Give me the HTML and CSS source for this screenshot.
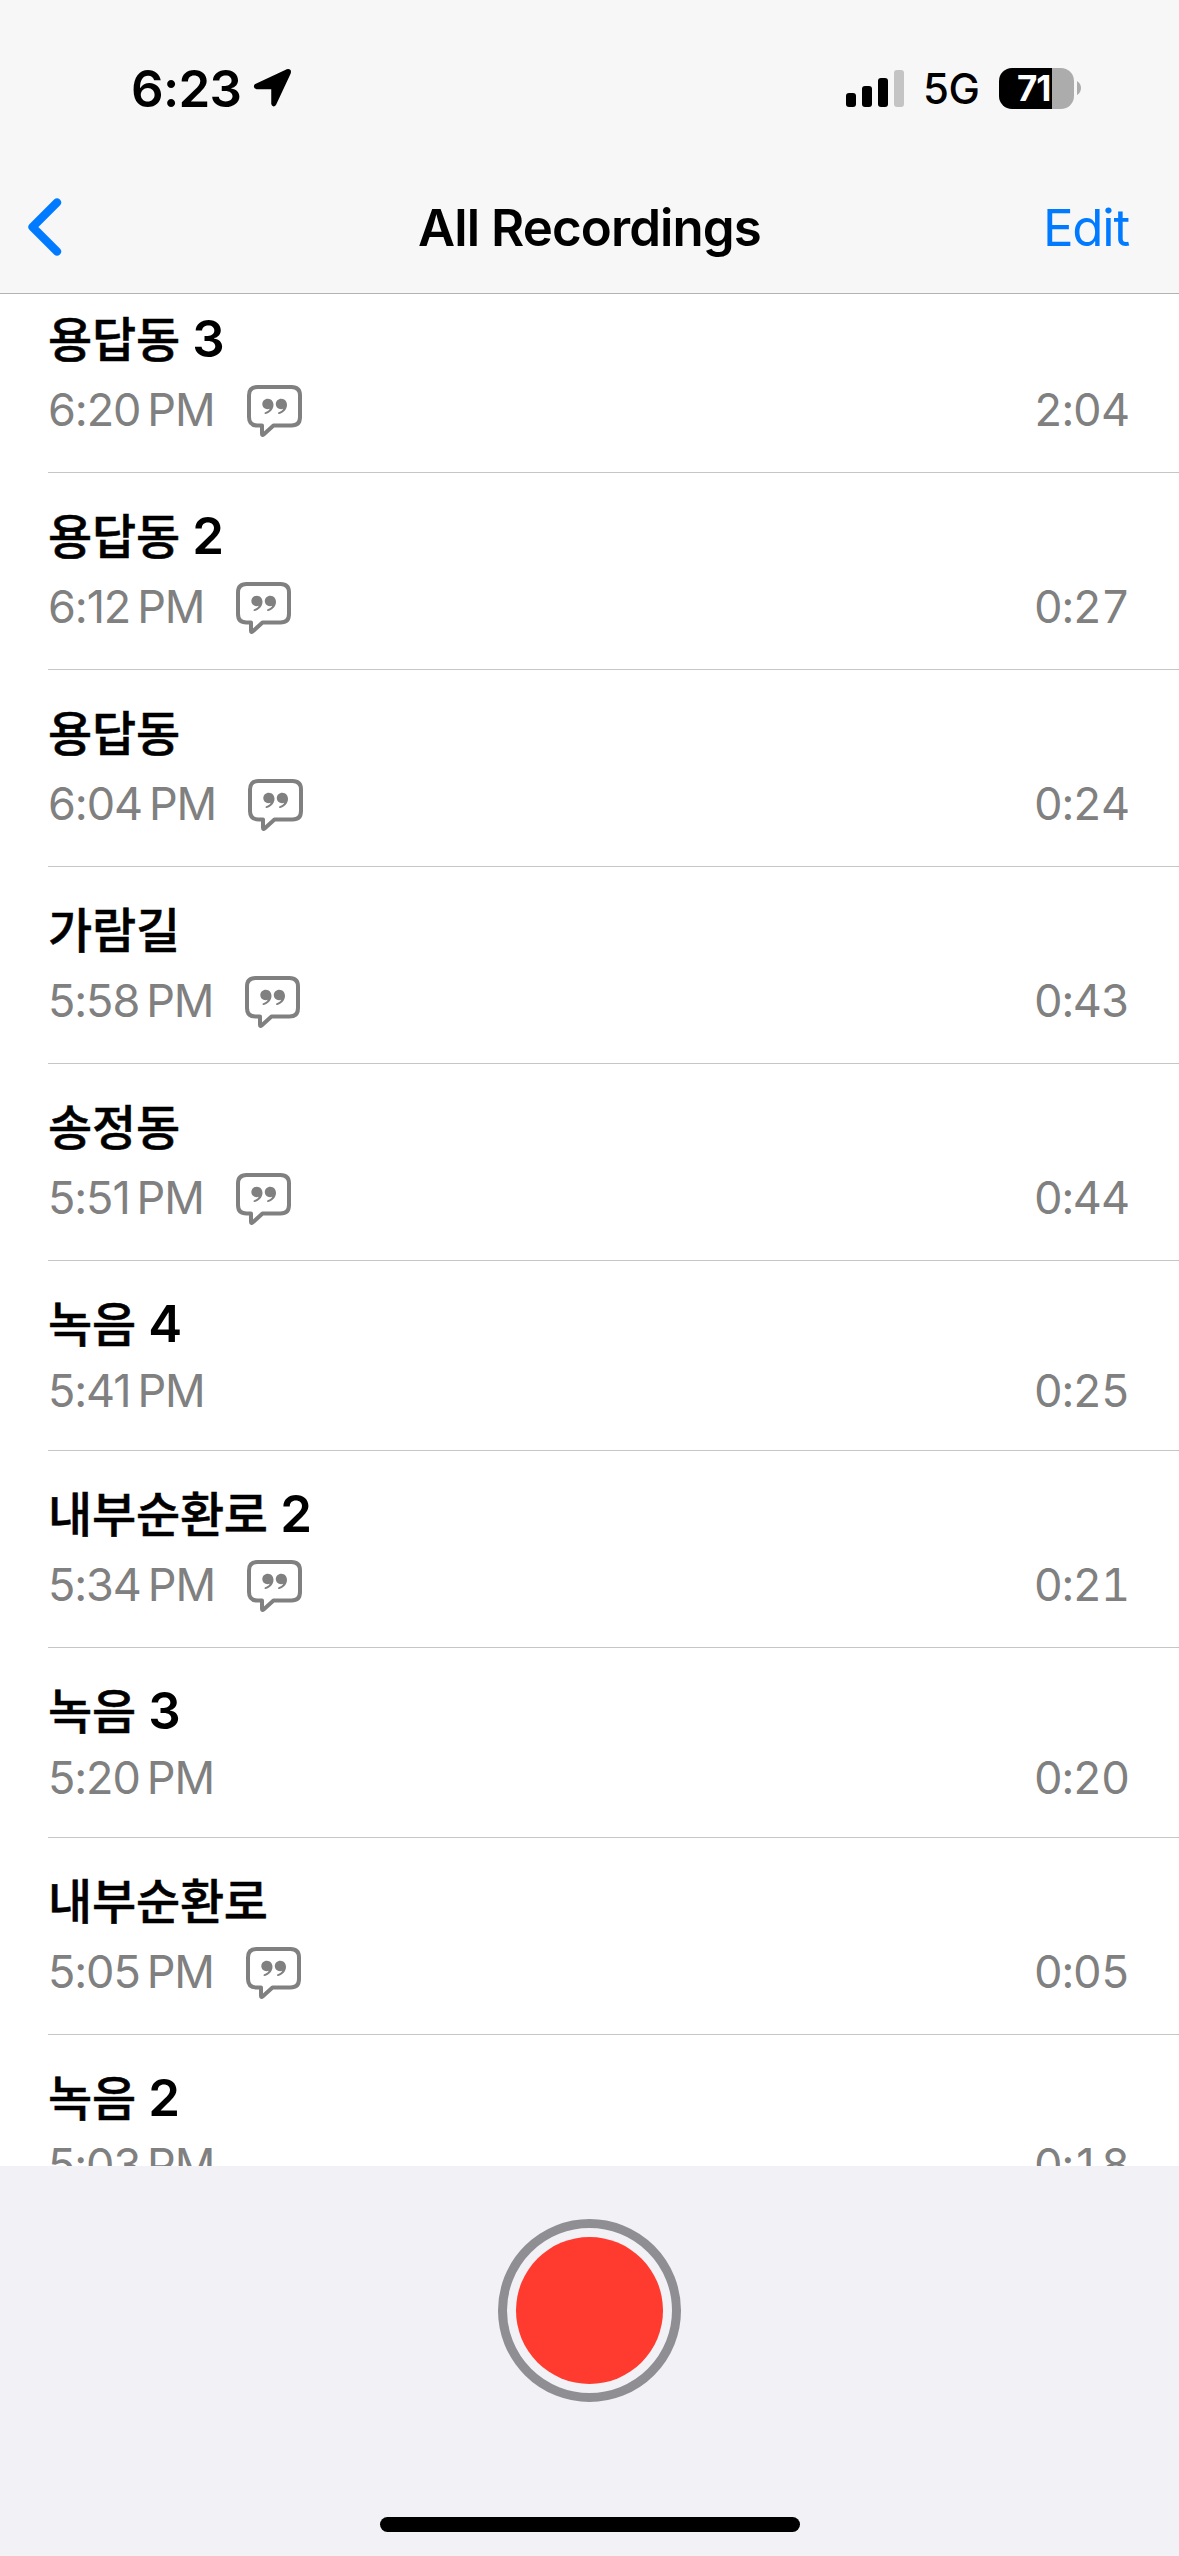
FILE: index.html
```html
<!DOCTYPE html>
<html lang="ko">
<head>
<meta charset="utf-8">
<title>All Recordings</title>
<link rel="stylesheet" href="styles.css">
</head>
<body>
<svg class="defs" width="0" height="0" aria-hidden="true">
  <symbol id="quote" viewBox="0 0 56 54">
    <path d="M10.500 2H44.500Q53 2 53 10.500V32Q53 40.500 44.500 40.500H26.500L16.600 49.500Q15 50.800 15 48.800V40.500H10.500Q2 40.500 2 32V10.500Q2 2 10.500 2Z" fill="none" stroke="currentColor" stroke-width="4" stroke-linejoin="round"/>
    <path id="mark" d="M20.800 13.700C24.300 13.700 26.500 16.500 26.500 19.800C26.500 24.500 23 28 18.700 29C17.300 29.200 17 27.700 18.200 27.300C20.600 26.500 22.200 25.100 22.700 23.800C18.900 25.200 15.300 22.700 15.300 19.100C15.300 16.100 17.700 13.700 20.800 13.700Z" fill="currentColor"/>
    <use href="#mark" x="13.500"/>
  </symbol>
</svg>
<div class="screen">
  <header class="header">
    <div class="status">
      <span class="clock">6:23</span>
      <svg class="location" width="39" height="40" viewBox="0 0 39 40"><path d="M3 17.500L34 3Q37 2 36 5L21.500 36Q20.500 37.500 20 35.500V19.500H4Q2 19 3 17.500Z" stroke="#000" stroke-width="3.500" stroke-linejoin="round"/></svg>
      <svg class="signal" width="58" height="37" viewBox="0 0 58 37"><rect y="23" width="10" height="14" rx="3"/><rect x="16" y="16" width="10" height="21" rx="3"/><rect x="32" y="8" width="10" height="29" rx="3"/><rect x="48" width="10" height="37" rx="3" fill="#c4c4c4"/></svg>
      <span class="network">5G</span>
      <div class="battery"><span class="level">71</span></div>
      <svg class="battery-tip" width="4" height="14" viewBox="0 0 4 14"><path d="M0 0Q4 2.500 4 7T0 14Z" fill="#acacac"/></svg>
    </div>
    <nav class="nav">
      <svg class="back" width="34" height="58" viewBox="0 0 34 58"><path d="M29 4.500L4.500 29L29 53.500" fill="none" stroke="#007aff" stroke-width="8.200" stroke-linecap="round" stroke-linejoin="round"/></svg>
      <h1 class="heading">All Recordings</h1>
      <span class="edit">Edit</span>
    </nav>
  </header>
  <main class="list">
    <article class="row"><h2 class="title"><span class="ko">용답동</span> 3</h2><div class="meta"><span class="time">6:20<i class="thin"></i>PM</span><svg class="quote"><use href="#quote"/></svg><span class="length">2:04</span></div></article>
    <article class="row"><h2 class="title"><span class="ko">용답동</span> 2</h2><div class="meta"><span class="time">6:12<i class="thin"></i>PM</span><svg class="quote"><use href="#quote"/></svg><span class="length">0:27</span></div></article>
    <article class="row"><h2 class="title"><span class="ko">용답동</span></h2><div class="meta"><span class="time">6:04<i class="thin"></i>PM</span><svg class="quote"><use href="#quote"/></svg><span class="length">0:24</span></div></article>
    <article class="row"><h2 class="title"><span class="ko">가람길</span></h2><div class="meta"><span class="time">5:58<i class="thin"></i>PM</span><svg class="quote"><use href="#quote"/></svg><span class="length">0:43</span></div></article>
    <article class="row"><h2 class="title"><span class="ko">송정동</span></h2><div class="meta"><span class="time">5:51<i class="thin"></i>PM</span><svg class="quote"><use href="#quote"/></svg><span class="length">0:44</span></div></article>
    <article class="row compact"><h2 class="title"><span class="ko">녹음</span> 4</h2><div class="meta"><span class="time">5:41<i class="thin"></i>PM</span><span class="length">0:25</span></div></article>
    <article class="row"><h2 class="title"><span class="ko">내부순환로</span> 2</h2><div class="meta"><span class="time">5:34<i class="thin"></i>PM</span><svg class="quote"><use href="#quote"/></svg><span class="length">0:21</span></div></article>
    <article class="row compact"><h2 class="title"><span class="ko">녹음</span> 3</h2><div class="meta"><span class="time">5:20<i class="thin"></i>PM</span><span class="length">0:20</span></div></article>
    <article class="row"><h2 class="title"><span class="ko">내부순환로</span></h2><div class="meta"><span class="time">5:05<i class="thin"></i>PM</span><svg class="quote"><use href="#quote"/></svg><span class="length">0:05</span></div></article>
    <article class="row compact"><h2 class="title"><span class="ko">녹음</span> 2</h2><div class="meta"><span class="time">5:03<i class="thin"></i>PM</span><span class="length">0:18</span></div></article>
  </main>
  <footer class="footer">
    <div class="record"><div class="record-dot"></div></div>
    <div class="home"></div>
  </footer>
</div>
</body>
</html>
```

FILE: styles.css
```css
* { box-sizing: border-box; }
body { margin: 0; }
svg { display: block; flex: none; }
.defs { position: absolute; }
.screen {
  width: 1179px;
  height: 2556px;
  display: flex;
  flex-direction: column;
  overflow: hidden;
  background: #fff;
  color: #000;
  font-family: Inter, "Noto Sans CJK KR", sans-serif;
}
.header {
  flex: none;
  height: 294px;
  background: #f7f7f7;
  border-bottom: 1px solid #b2b2b2;
}
.status {
  height: 176px;
  display: flex;
  align-items: center;
  padding: 0 98px 0 131px;
}
.clock { width: 122px; font-size: 51px; font-weight: 600; letter-spacing: -0.7px; }
.signal { margin: 0 19px 0 auto; }
.network { width: 76px; font-size: 42px; font-weight: 500; letter-spacing: -0.5px; }
.battery {
  width: 75px;
  height: 41px;
  border-radius: 13px;
  background: linear-gradient(90deg, #000 53px, #acacac 53px);
}
.level {
  display: block;
  padding-left: 18px;
  color: #fff;
  font-size: 35px;
  font-weight: 700;
  line-height: 41px;
  letter-spacing: -1px;
}
.battery-tip { margin-left: 3px; }
.nav {
  height: 102px;
  display: grid;
  grid-template-columns: 1fr auto 1fr;
  align-items: center;
  padding: 0 28px;
}
.heading { margin: 0; font-size: 51px; font-weight: 600; letter-spacing: -0.9px; }
.edit { justify-self: end; margin-right: 22px; color: #007aff; font-size: 51px; letter-spacing: -1.2px; }
.list { flex: none; height: 1872px; overflow: hidden; }
.row {
  height: 197px;
  margin-left: 48px;
  padding: 33px 50px 0 0;
  border-bottom: 1px solid #c6c6c8;
}
.row:first-child { margin-top: -18px; }
.compact { height: 190px; }
.title { margin: 0; height: 60px; font-size: 51px; font-weight: 600; line-height: 60px; letter-spacing: -0.4px; }
.ko {
  font-family: "Noto Sans CJK KR", sans-serif;
  font-size: 48px;
  font-weight: 500;
  line-height: 0;
  letter-spacing: -0.2px;
  -webkit-text-stroke: 0.5px #000;
}
.meta {
  height: 60px;
  margin-top: 11px;
  display: flex;
  align-items: center;
  color: #808080;
  font-size: 45px;
  line-height: 52px;
}
.compact .meta { height: 52px; }
.time { letter-spacing: -1.1px; }
.thin { display: inline-block; width: 7px; }
.quote { width: 56px; height: 54px; margin: 3px 0 0 32px; }
.length { margin: 0 0 0 auto; font-variant-numeric: tabular-nums; letter-spacing: -1.1px; }
.footer {
  flex: 1;
  display: flex;
  flex-direction: column;
  align-items: center;
  justify-content: space-between;
  padding: 53px 0 24px;
  background: #f2f1f6;
}
.record { width: 183px; height: 183px; padding: 9px; border: 9px solid #8e8e93; border-radius: 50%; }
.record-dot { height: 100%; border-radius: 50%; background: #ff3b30; }
.home { width: 420px; height: 15px; border-radius: 8px; background: #000; }
```
